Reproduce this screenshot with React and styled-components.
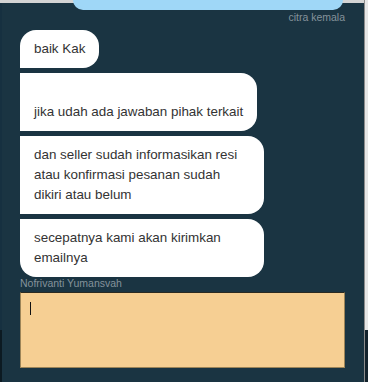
import React from 'react';
import styled, { createGlobalStyle } from 'styled-components';

const GlobalStyle = createGlobalStyle`
  html, body {
    margin: 0;
    padding: 0;
    background: #1a3442;
  }
  body {
    font-family: 'Liberation Sans', Arial, sans-serif;
  }
`;

const Frame = styled.div`
  display: flex;
  width: 368px;
  height: 382px;
  overflow: hidden;
`;

const LeftEdge = styled.div`
  width: 2px;
  flex-shrink: 0;
  background: linear-gradient(#d4d4d4 0 3px, #163040 3px 330px, #0c1a22 330px);
`;

const RightEdge = styled.div`
  width: 4px;
  flex-shrink: 0;
  border-left: 1px solid #8c8c8c;
  background: linear-gradient(#e6e6e6 0 330px, #13232d 330px);
`;

const Panel = styled.div`
  flex: 1;
  display: flex;
  flex-direction: column;
  padding: 0 19px 0 18px;
  background: linear-gradient(#d4d4d4 0 3px, #1a3442 3px);
`;

const OwnBubble = styled.div`
  align-self: flex-end;
  width: 270px;
  height: 10px;
  margin-right: 2px;
  background: #9fd7f7;
  border-radius: 0 0 16px 16px;
`;

const Sender = styled.div`
  font-size: 10.5px;
  line-height: 13px;
  color: #84929b;
  text-align: ${(p) => (p.right ? 'right' : 'left')};
  margin-top: ${(p) => p.top || 0}px;
`;

const Thread = styled.div`
  display: flex;
  flex-direction: column;
  align-items: flex-start;
  gap: 5px;
  margin-top: 6px;
`;

const radius = (pos) => {
  if (pos === 'first') return '16px 16px 16px 0';
  if (pos === 'last') return '0 16px 16px 16px';
  return '0 16px 16px 0';
};

const Bubble = styled.div`
  max-width: 216px;
  padding: 9px 14px;
  background: #ffffff;
  color: #333333;
  font-size: 13.4px;
  line-height: 20px;
  white-space: pre-line;
  border-radius: ${(p) => radius(p.pos)};
`;

const ComposerWrap = styled.div`
  position: relative;
  margin-top: 2px;
`;

const Composer = styled.textarea`
  display: block;
  box-sizing: border-box;
  width: 325px;
  height: 76px;
  padding: 9px 9px;
  resize: none;
  outline: none;
  background: #f6cf93;
  border: 1px solid #9c8458;
  border-top-color: #2a2a22;
  color: #222;
  caret-color: transparent;
  font-family: 'Liberation Sans', Arial, sans-serif;
  font-size: 13px;
  line-height: 15px;
`;

const Caret = styled.span`
  position: absolute;
  left: 10px;
  top: 10px;
  width: 1px;
  height: 13px;
  background: #111;
  pointer-events: none;
`;

const messages = [
  { text: 'baik Kak', pos: 'first' },
  { text: '\njika udah ada jawaban pihak terkait', pos: 'mid' },
  { text: 'dan seller sudah informasikan resi atau konfirmasi pesanan sudah dikiri atau belum', pos: 'mid' },
  { text: 'secepatnya kami akan kirimkan emailnya', pos: 'last' },
];

export default function App() {
  return (
    <>
      <GlobalStyle />
      <Frame>
        <LeftEdge />
        <Panel>
          <OwnBubble />
          <Sender right top={1}>citra kemala</Sender>
          <Thread>
            {messages.map((m, i) => (
              <Bubble key={i} pos={m.pos}>
                {m.text}
              </Bubble>
            ))}
          </Thread>
          <Sender>Nofrivanti Yumansvah</Sender>
          <ComposerWrap>
            <Composer autoFocus />
            <Caret />
          </ComposerWrap>
        </Panel>
        <RightEdge />
      </Frame>
    </>
  );
}
